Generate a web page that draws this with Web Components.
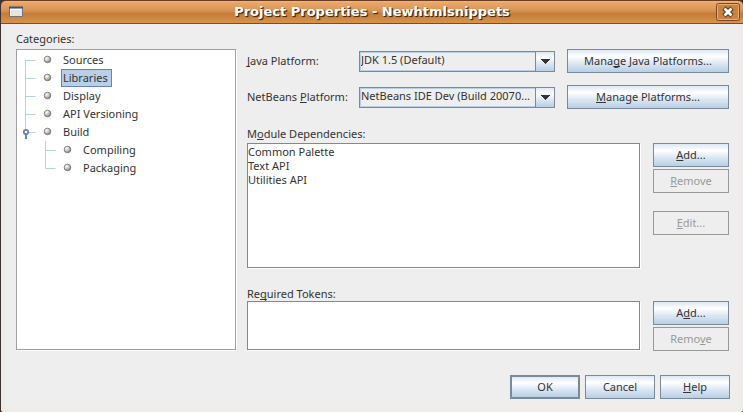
<!DOCTYPE html>
<html lang="en">
<head>
<meta charset="utf-8">
<title>Project Properties - Newhtmlsnippets</title>
<style>
  html, body { height: 100%; margin: 0; }
  body {
    --line: #7a8a99;
    --soft: #b8cfe5;
    --ink: #333333;
    --panel: #eeeeee;
    --steel: linear-gradient(#dde8f3 0%, #ffffff 30%, #dde8f3 60%, #b8cfe5 100%);
    font: 11px/14px "Noto Sans", "Open Sans", sans-serif;
    color: var(--ink);
    background: #3c3230;
  }
</style>
</head>
<body>
<properties-dialog></properties-dialog>

<template id="title-bar">
  <style>
    :host {
      display: grid; grid-template-columns: 20px 1fr 24px; align-items: center;
      box-sizing: border-box; height: 24px; padding: 0 3px 0 7px;
      border-top: 1px solid #6b3d20; border-bottom: 1px solid #7d4c22;
      background: linear-gradient(#f2b67c 0, #e8a566 2px, #dd985a 8px, #d28c4c 11px, #c47c36 12px, #cc8741 17px, #d8934d 22px);
      border-radius: 5px 5px 0 0;
    }
    h1 {
      margin: 0; text-align: center; color: #fff; white-space: nowrap;
      font: bold 13px/16px "DejaVu Sans", sans-serif; text-shadow: 1px 1px 1px #4a2a10, 1px 1px 0 #5a3a20;
    }
    svg { display: block; }
    button { display: block; padding: 0; border: 0; background: none; width: 24px; height: 18px; }
  </style>
  <svg width="16" height="12" viewBox="0 0 16 12" aria-hidden="true">
    <path d="M1.500 1.500h13v9h-13z" fill="#e4e4e2" stroke="#737373"/>
    <path d="M1 1.500h14" stroke="#3d5474" stroke-width="2"/>
    <path d="M2.500 9.500V3.500h11" fill="none" stroke="#fff"/>
  </svg>
  <h1><slot></slot></h1>
  <button type="button" aria-label="Close">
    <svg width="24" height="18" viewBox="0 0 24 18">
      <rect x=".5" y=".5" width="23" height="17" rx="2" fill="#c98342" stroke="#7b4a22"/>
      <rect x="1.500" y="1.500" width="21" height="15" rx="1" fill="none" stroke="#e8ad74"/>
      <path d="M8 5l8 8m0-8l-8 8" stroke="#5d3818" stroke-width="5"/>
      <path d="M8.500 5.500l7 7m0-7l-7 7" stroke="#fff" stroke-width="2.800"/>
    </svg>
  </button>
</template>

<template id="push-button">
  <style>
    :host { display: block; }
    button {
      display: block; box-sizing: border-box; width: 100%; height: 24px; padding: 0 4px;
      font: inherit; color: inherit; white-space: nowrap;
      border: 1px solid var(--line); border-radius: 0; background: var(--steel);
    }
    :host([primary]) button { border-width: 2px; }
    button:disabled { color: #999; border-color: #999; background: none; }
  </style>
  <button type="button"><slot></slot></button>
</template>

<template id="combo-field">
  <style>
    :host { display: grid; grid-template-columns: 112px 1fr; align-items: center; }
    .box {
      display: grid; grid-template-columns: 1fr 19px; box-sizing: border-box; height: 21px;
      border: 1px solid var(--line); min-width: 0;
    }
    select {
      grid-area: 1 / 1 / 2 / 3; appearance: none; min-width: 0; width: 100%; height: 19px; margin: 0;
      padding: 0 20px 2px 0; border: 1px solid var(--soft); border-radius: 0;
      background: var(--panel); font: inherit; color: inherit;
    }
    .arrow {
      grid-area: 1 / 2; display: grid; place-items: center; pointer-events: none; z-index: 1;
      border-left: 1px solid var(--line); background: var(--steel);
    }
  </style>
  <label for="s"><slot></slot></label>
  <div class="box">
    <select id="s"><option></option></select>
    <span class="arrow"><svg width="10" height="5" viewBox="0 0 10 5" shape-rendering="crispEdges"><path d="M0 0h10L5 5z" fill="#333"/></svg></span>
  </div>
</template>

<template id="list-field">
  <style>
    :host { display: grid; grid-template: auto 1fr / minmax(0, 1fr) 76px; gap: 0 13px; min-height: 0; }
    label { grid-column: 1 / 3; }
    select {
      appearance: none; box-sizing: border-box; width: 100%; height: 100%; min-height: 49px; margin: 0; padding: 0;
      border: 1px solid var(--line); border-radius: 0; background: #fff; box-shadow: 1px 1px 0 #fff;
      font: inherit; color: inherit; overflow: auto;
    }
    option { box-sizing: border-box; padding: 0; height: 14px; min-height: 0; line-height: 14px; color: var(--ink); }
    .actions { display: flex; flex-direction: column; gap: 2px; margin-bottom: -1px; }
  </style>
  <label for="l"><slot></slot></label>
  <select id="l" size="2"></select>
  <div class="actions"><slot name="action"></slot></div>
</template>

<template id="tree-item">
  <style>
    :host { display: flex; align-items: center; height: 18px; }
    span { box-sizing: border-box; height: 18px; padding: 0 2px 0 1px; border: 1px solid transparent; line-height: 16px; }
    :host([selected]) span { background: var(--soft); border-color: #6382bf; padding-right: 3px; }
    svg { display: block; flex: none; }
  </style>
  <svg height="18" aria-hidden="true">
    <defs><radialGradient id="g" cx=".35" cy=".3" r=".75"><stop offset="0" stop-color="#fff"/><stop offset=".45" stop-color="#ccc"/><stop offset="1" stop-color="#777"/></radialGradient></defs>
    <path class="wire" fill="none" stroke="#b8cfe5"/>
    <circle class="dot" cy="8.500" r="3.300" fill="url(#g)" stroke="#707070" stroke-width=".8"/>
    <g class="handle"><circle cx="9" cy="9" r="2.200" fill="#fff" stroke="#6382bf" stroke-width="1.800"/><path d="M9 11v5" stroke="#6382bf" stroke-width="2"/></g>
  </svg>
  <span><slot></slot></span>
</template>

<template id="category-tree">
  <style>
    :host { display: flex; flex-direction: column; gap: 3px; }
    .tree { flex: 1; padding-top: 1px; border: 1px solid #a0a0a0; background: #fff; box-shadow: 1px 1px 0 #fff; }
  </style>
  <div id="t">Categories:</div>
  <div class="tree" role="tree" aria-labelledby="t">
    <tree-item edge="first">Sources</tree-item>
    <tree-item selected>Libraries</tree-item>
    <tree-item>Display</tree-item>
    <tree-item>API Versioning</tree-item>
    <tree-item edge="handle">Build</tree-item>
    <tree-item nested>Compiling</tree-item>
    <tree-item nested edge="last">Packaging</tree-item>
  </div>
</template>

<template id="properties-dialog">
  <style>
    :host { display: flex; flex-direction: column; box-sizing: border-box; min-height: 100vh; padding-left: 1px; }
    main {
      flex: 1; display: flex; flex-direction: column; gap: 25px; padding: 8px 9px 10px 10px;
      border: solid #efebe7; border-width: 0 4px 3px 5px; border-radius: 0 0 3px 3px; background: var(--panel);
    }
    .columns { flex: 1; display: grid; grid-template-columns: 220px minmax(0, 1fr); gap: 11px; }
    .panel { display: flex; flex-direction: column; padding: 17px 1px 0 0; }
    .platform { display: grid; grid-template-columns: minmax(0, 1fr) 162px; gap: 12px; margin-bottom: 12px; align-items: center; }
    .modules { flex: 1; margin: 6px 0 19px; row-gap: 2px; }
    .edit { margin-top: 16px; }
    .footer { display: grid; grid-template-columns: repeat(3, 70px); gap: 5px; justify-content: end; }
    u { text-underline-offset: 1px; text-decoration-thickness: 1px; text-decoration-skip-ink: none; }
  </style>
  <title-bar>Project Properties - Newhtmlsnippets</title-bar>
  <main>
    <div class="columns">
      <category-tree></category-tree>
      <div class="panel">
        <div class="platform">
          <combo-field value="JDK 1.5 (Default)"><u>J</u>ava Platform:</combo-field>
          <push-button>Mana<u>g</u>e Java Platforms...</push-button>
        </div>
        <div class="platform">
          <combo-field value="NetBeans IDE Dev (Build 20070...">NetBeans <u>P</u>latform:</combo-field>
          <push-button><u>M</u>anage Platforms...</push-button>
        </div>
        <list-field class="modules" items="Common Palette|Text API|Utilities API">M<u>o</u>dule Dependencies:
          <push-button slot="action"><u>A</u>dd...</push-button>
          <push-button slot="action" disabled><u>R</u>emove</push-button>
          <push-button slot="action" disabled class="edit"><u>E</u>dit...</push-button>
        </list-field>
        <list-field items="">Re<u>q</u>uired Tokens:
          <push-button slot="action">A<u>d</u>d...</push-button>
          <push-button slot="action" disabled>Remo<u>v</u>e</push-button>
        </list-field>
      </div>
    </div>
    <div class="footer">
      <push-button primary>OK</push-button>
      <push-button>Cancel</push-button>
      <push-button><u>H</u>elp</push-button>
    </div>
  </main>
</template>

<script>
  const define = (name, setup = () => {}) => customElements.define(name, class extends HTMLElement {
    connectedCallback() {
      if (this.shadowRoot) return;
      const root = this.attachShadow({ mode: 'open' });
      root.append(document.getElementById(name).content.cloneNode(true));
      setup(this, root);
    }
  });
  define('title-bar');
  define('push-button', (el, root) => {
    root.querySelector('button').disabled = el.hasAttribute('disabled');
  });
  define('combo-field', (el, root) => {
    root.querySelector('option').textContent = el.getAttribute('value');
  });
  define('list-field', (el, root) => {
    const list = root.querySelector('select');
    el.getAttribute('items').split('|').filter(Boolean).forEach(text => list.add(new Option(text)));
  });
  define('tree-item', (el, root) => {
    const nested = el.hasAttribute('nested'), edge = el.getAttribute('edge');
    const x = nested ? 28.5 : 8.5;
    el.setAttribute('role', 'treeitem');
    root.querySelector('svg').setAttribute('width', nested ? 64 : 44);
    root.querySelector('.wire').setAttribute('d',
      `M${x} ${edge === 'first' ? 9 : 0}V${edge === 'last' || edge === 'handle' ? 9.5 : 18}M${x} 9.5h10`);
    root.querySelector('.dot').setAttribute('cx', nested ? 50.5 : 30.5);
    if (edge !== 'handle') root.querySelector('.handle').remove();
  });
  define('category-tree');
  define('properties-dialog');
</script>
</body>
</html>
